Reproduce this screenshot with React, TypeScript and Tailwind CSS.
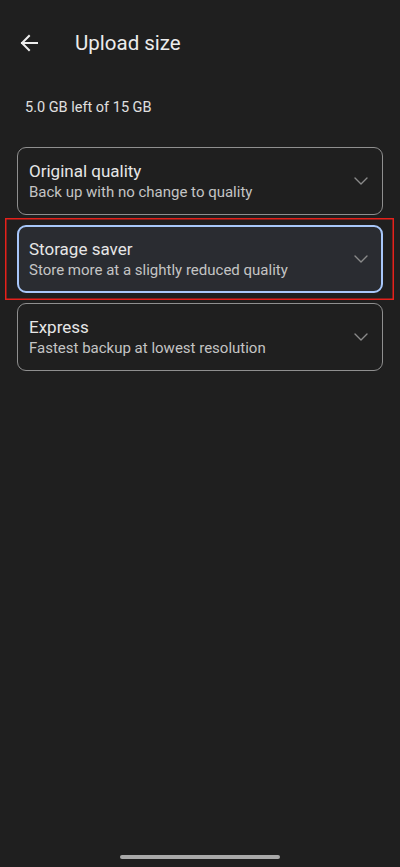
import React from "react";

const Chevron = () => (
  <svg width="14" height="8" viewBox="0 0 14 8" fill="none" className="shrink-0">
    <path d="M1 1l6 6 6-6" stroke="#8a8a8a" strokeWidth="1.4" strokeLinecap="round" strokeLinejoin="round" />
  </svg>
);

const Option = ({ title, sub, selected }: { title: string; sub: string; selected?: boolean }) => (
  <div
    className={
      "flex h-[68px] items-center justify-between rounded-[9px] " +
      (selected
        ? "border-[2px] border-[#a8c7fa] bg-[#2a2c31] pl-[10px] pr-[13px]"
        : "border-[1.5px] border-[#8f8f8f] pl-[11px] pr-[14px]")
    }
  >
    <div className="flex flex-col pt-[1px]">
      <div className="text-[17px] leading-[22px] text-[#e6e6e6]">{title}</div>
      <div className="text-[15px] leading-[21px] text-[#c4c4c4]">{sub}</div>
    </div>
    <Chevron />
  </div>
);

export default function App() {
  return (
    <div
      className="relative flex h-[867px] w-[400px] flex-col bg-[#1f1f1f]"
      style={{ fontFamily: "Roboto, 'Noto Sans', sans-serif" }}
    >
      <div className="flex h-[44px] items-center pl-[20px] mt-[21px]">
        <svg width="18" height="18" viewBox="0 0 18 18" fill="none">
          <path d="M17 9H2M9 2L2 9l7 7" stroke="#ededed" strokeWidth="2" strokeLinecap="square" />
        </svg>
        <div className="ml-[37px] text-[20.5px] text-[#ececec]">Upload size</div>
      </div>
      <div className="mt-[33px] pl-[25px] text-[14.5px] leading-[20px] text-[#e0e0e0]">5.0 GB left of 15 GB</div>
      <div className="mt-[29px] flex flex-col gap-[10px] px-[17px]">
        <Option title="Original quality" sub="Back up with no change to quality" />
        <div className="relative">
          <Option title="Storage saver" sub="Store more at a slightly reduced quality" selected />
          <div className="pointer-events-none absolute left-[-12px] right-[-11px] top-[-7px] bottom-[-7px] shadow-[inset_0_0_0_1.5px_#e5211b]" />
        </div>
        <Option title="Express" sub="Fastest backup at lowest resolution" />
      </div>
      <div className="absolute bottom-[8px] left-[120px] h-[4px] w-[160px] rounded-full bg-[#a9a9a9]" />
    </div>
  );
}
